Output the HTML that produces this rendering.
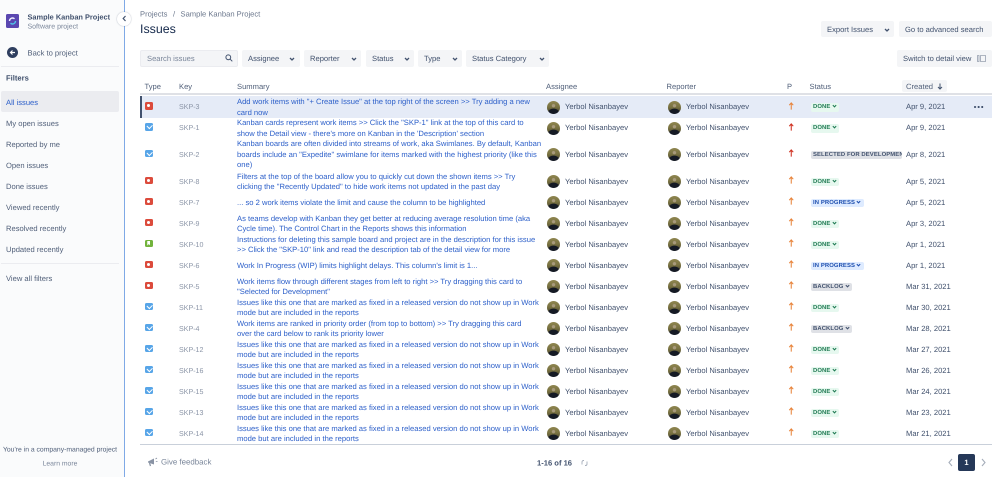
<!DOCTYPE html>
<html lang="en"><head><meta charset="utf-8"><title>Issues</title>
<style>
*{box-sizing:border-box}
html,body{margin:0;padding:0;background:#fff}
body{width:999px;height:477px;overflow:hidden;position:relative;font-family:"Liberation Sans",sans-serif;font-size:7.6px;color:#42526e;filter:blur(.25px);text-rendering:geometricPrecision}
.a{position:absolute;white-space:nowrap}
.c{line-height:12px;height:12px;transform:translateY(-5.3px)}
.btn{position:absolute;background:#f4f5f7;border-radius:2px;height:17px;line-height:18px;white-space:nowrap;color:#42526e;padding-left:6px;font-size:7.6px}
.btn svg{position:absolute;top:6.5px;width:6px;height:4px}
.side{position:absolute;left:0;top:0;width:124.5px;height:477px;background:#fafbfc;border-right:1.5px solid #7fa9e6}
.nav{position:absolute;left:6px;line-height:12px;height:12px;color:#505f79;margin-top:.7px}
.th{position:absolute;top:80.7px;line-height:12px;color:#505f79}
.r{position:absolute;left:0;width:999px;height:0}
.r>*{position:absolute}
.ty{left:145px;top:-4.5px;width:7.5px;height:7.5px;border-radius:1.5px}
.bug{background:#dc4b3c}.bug:after{content:"";position:absolute;left:2.25px;top:2.25px;width:3px;height:3px;border-radius:50%;background:#fff}
.task{background:#57a5e8}.task:after{content:"";position:absolute;left:1.8px;top:1.4px;width:4.2px;height:2.6px;border-left:1.1px solid #fff;border-bottom:1.1px solid #fff;transform:rotate(-45deg)}
.story{background:#72b33c}.story:after{content:"";position:absolute;left:2.25px;top:1.5px;width:3px;height:4.5px;background:#fff;clip-path:polygon(0 0,100% 0,100% 100%,50% 70%,0 100%)}
.k{left:179px;top:-5.5px;line-height:12px;color:#8a94a6;font-size:7.1px;white-space:nowrap}
.s{left:237px;color:#2c5fc9;line-height:10.5px;white-space:nowrap;font-size:7.62px;margin-top:1px}
.av{width:13px;height:13px;top:-6px;border-radius:50%;background:radial-gradient(circle at 50% 36%,#a89a7c 0 13%,transparent 19%),radial-gradient(ellipse 6px 5px at 50% 95%,#151a24 0 90%,transparent 100%),linear-gradient(180deg,#8f8650 0,#777040 50%,#2e2f28 100%)}
.av1{left:547px}.av2{left:668px}
.n{top:-5.5px;line-height:12px;white-space:nowrap;color:#42526e}
.n1{left:565px}.n2{left:686px}
.ar{left:788px;top:-5px;width:6.5px;height:8px}
.p{left:810.5px;top:-3.5px;height:8.5px;line-height:8.7px;border-radius:2px;font-size:5.9px;font-weight:bold;padding:0 2.5px;white-space:nowrap;letter-spacing:.1px}
.p svg{display:inline-block;width:5px;height:4px;margin-left:1.2px;vertical-align:0}
.done{background:#e6f8ef;color:#1f7a52}
.prog{background:#deebff;color:#1f50b0}
.back{background:#dfe1e6;color:#42526e}
.d{left:906px;top:-5.5px;line-height:12px;white-space:nowrap;color:#42526e}
</style></head><body>
<svg width="0" height="0" style="position:absolute"><defs>
<path id="ch" d="M1 1 L3 3 L5 1" fill="none" stroke-width="1.3"/>
<path id="up" d="M3.5 9.5 V1.5 M1 4 L3.5 1.2 L6 4" fill="none" stroke-width="1.3"/>
</defs></svg>

<div class="side">
  <div class="a" style="left:6px;top:14px;width:13px;height:13.5px;background:#5a47b0;border-radius:1.5px"></div>
  <svg class="a" style="left:8px;top:16px" width="9" height="10" viewBox="0 0 9 10"><path d="M1.5 5a3 3 0 0 1 5-2.2" stroke="#f0f0ff" stroke-width="1.4" fill="none"/><path d="M7.5 5a3 3 0 0 1-5 2.2" stroke="#4fc3e8" stroke-width="1.4" fill="none"/></svg>
  <div class="a c" style="left:27.5px;top:17px;color:#42526e;font-weight:bold;font-size:7.4px">Sample Kanban Project</div>
  <div class="a c" style="left:27.5px;top:26.5px;color:#7a869a;font-size:7px">Software project</div>
  <div class="a" style="left:7px;top:47px;width:11px;height:11px;border-radius:50%;background:#2f3f60"></div>
  <svg class="a" style="left:9px;top:49px" width="7" height="7" viewBox="0 0 7 7"><path d="M6 3.5H1.5M3.5 1.5L1.5 3.5L3.5 5.5" stroke="#fff" stroke-width="1.2" fill="none"/></svg>
  <div class="a c" style="left:27.5px;top:52.5px;color:#505f79">Back to project</div>
  <div class="a" style="left:1px;top:66px;width:118px;height:1px;background:#ebecf0"></div>
  <div class="a c" style="left:6px;top:78px;color:#42526e;font-weight:bold">Filters</div>
  <div class="a" style="left:1px;top:91px;width:118px;height:21px;background:#ebecf0;border-radius:2px"></div>
  <div class="nav" style="top:96px;color:#2c5fc9">All issues</div>
  <div class="nav" style="top:117px">My open issues</div>
  <div class="nav" style="top:138px">Reported by me</div>
  <div class="nav" style="top:159px">Open issues</div>
  <div class="nav" style="top:180px">Done issues</div>
  <div class="nav" style="top:201px">Viewed recently</div>
  <div class="nav" style="top:222px">Resolved recently</div>
  <div class="nav" style="top:243px">Updated recently</div>
  <div class="a" style="left:1px;top:263px;width:118px;height:1px;background:#ebecf0"></div>
  <div class="nav" style="top:272px">View all filters</div>
  <div class="a c" style="left:0;width:120px;text-align:center;top:450px;font-size:6.8px;color:#505f79">You're in a company-managed project</div>
  <div class="a c" style="left:0;width:120px;text-align:center;top:464px;font-size:6.8px;color:#7a869a">Learn more</div>
</div>
<div class="a" style="left:117px;top:11.5px;width:14px;height:14px;border-radius:50%;background:#fff;box-shadow:0 0 1.5px rgba(9,30,66,.35)"></div>
<svg class="a" style="left:122px;top:15px" width="5" height="7" viewBox="0 0 5 7"><path d="M3.5 1L1.2 3.5L3.5 6" stroke="#42526e" stroke-width="1.2" fill="none"/></svg>

<div class="a c" style="left:140px;top:14px;color:#6b778c">Projects</div>
<div class="a c" style="left:173px;top:14px;color:#6b778c">/</div>
<div class="a c" style="left:180.5px;top:14px;color:#6b778c">Sample Kanban Project</div>
<div class="a" style="left:140px;top:20px;line-height:18px;font-size:12.4px;color:#172b4d;font-weight:500">Issues</div>

<div class="a" style="left:140px;top:50px;width:98px;height:17px;background:#f4f5f7;border:1px solid #ebecf0;border-radius:2px;line-height:16px;padding-left:6px;color:#7a869a">Search issues</div>
<svg class="a" style="left:225px;top:54px" width="8" height="8" viewBox="0 0 8 8"><circle cx="3.3" cy="3.3" r="2.4" fill="none" stroke="#42526e" stroke-width="1"/><path d="M5.2 5.2L7.3 7.3" stroke="#42526e" stroke-width="1"/></svg>
<div class="btn" style="left:242px;top:50px;width:58px">Assignee<svg viewBox="0 0 6 4" style="left:47px" stroke="#42526e"><use href="#ch"/></svg></div>
<div class="btn" style="left:304px;top:50px;width:57px">Reporter<svg viewBox="0 0 6 4" style="left:47px" stroke="#42526e"><use href="#ch"/></svg></div>
<div class="btn" style="left:366px;top:50px;width:48px">Status<svg viewBox="0 0 6 4" style="left:38px" stroke="#42526e"><use href="#ch"/></svg></div>
<div class="btn" style="left:418px;top:50px;width:44px">Type<svg viewBox="0 0 6 4" style="left:34px" stroke="#42526e"><use href="#ch"/></svg></div>
<div class="btn" style="left:466px;top:50px;width:83px">Status Category<svg viewBox="0 0 6 4" style="left:73px" stroke="#42526e"><use href="#ch"/></svg></div>
<div class="btn" style="left:821px;top:21px;width:73px;height:16px;line-height:17px">Export Issues<svg viewBox="0 0 6 4" style="left:63px" stroke="#42526e"><use href="#ch"/></svg></div>
<div class="btn" style="left:899px;top:21px;width:93px;height:16px;line-height:17px">Go to advanced search</div>
<div class="btn" style="left:897px;top:50px;width:95px">Switch to detail view</div>
<svg class="a" style="left:977px;top:55px" width="9" height="7" viewBox="0 0 9 7"><path d="M.5.5h1.5v6H.5zM3.5.5H8.5v6H3.5z" fill="none" stroke="#97a0af" stroke-width=".8"/></svg>

<div class="th" style="left:144.5px">Type</div>
<div class="th" style="left:179px">Key</div>
<div class="th" style="left:237px">Summary</div>
<div class="th" style="left:546px">Assignee</div>
<div class="th" style="left:666.5px">Reporter</div>
<div class="th" style="left:787px">P</div>
<div class="th" style="left:809.5px">Status</div>
<div class="a" style="left:902px;top:80px;width:45px;height:12px;background:#f4f5f7;border-radius:2px"></div>
<div class="th" style="left:906px">Created</div>
<svg class="a" style="left:937px;top:83px" width="6" height="7" viewBox="0 0 6 7"><path d="M3 .5V6M1 4L3 6L5 4" fill="none" stroke="#42526e" stroke-width="1"/></svg>
<div class="a" style="left:140px;top:93px;width:852px;height:1.5px;background:#dfe1e6"></div>

<div class="a" style="left:140px;top:96px;width:852px;height:21.5px;background:#e5ebf7"></div>
<div class="a" style="left:140px;top:96px;width:1.5px;height:21.5px;background:#42526e"></div>

<div class="r" style="top:106.5px"><div class="ty bug"></div><div class="k">SKP-3</div><div class="s" style="top:-10.5px">Add work items with "+ Create Issue" at the top right of the screen &gt;&gt; Try adding a new<br>card now</div><div class="av av1"></div><div class="n n1">Yerbol Nisanbayev</div><div class="av av2"></div><div class="n n2">Yerbol Nisanbayev</div><svg class="ar" viewBox="0 0 7 10" stroke="#e8833a"><use href="#up"/></svg><div class="p done">DONE<svg viewBox="0 0 6 4" stroke="#1f7a52"><use href="#ch"/></svg></div><div class="d">Apr 9, 2021</div></div>
<div class="a" style="left:974px;top:106px;width:10px;height:2px;background:radial-gradient(circle at 1px 1px,#42526e 1px,transparent 1.1px) 0 0/3.6px 2px"></div>

<div class="r" style="top:127.5px"><div class="ty task"></div><div class="k">SKP-1</div><div class="s" style="top:-10.5px">Kanban cards represent work items &gt;&gt; Click the "SKP-1" link at the top of this card to<br>show the Detail view - there's more on Kanban in the 'Description' section</div><div class="av av1"></div><div class="n n1">Yerbol Nisanbayev</div><div class="av av2"></div><div class="n n2">Yerbol Nisanbayev</div><svg class="ar" viewBox="0 0 7 10" stroke="#cf2f1e"><use href="#up"/></svg><div class="p done">DONE<svg viewBox="0 0 6 4" stroke="#1f7a52"><use href="#ch"/></svg></div><div class="d">Apr 9, 2021</div></div>

<div class="r" style="top:154px"><div class="ty task"></div><div class="k">SKP-2</div><div class="s" style="top:-15.75px">Kanban boards are often divided into streams of work, aka Swimlanes. By default, Kanban<br>boards include an "Expedite" swimlane for items marked with the highest priority (like this<br>one)</div><div class="av av1"></div><div class="n n1">Yerbol Nisanbayev</div><div class="av av2"></div><div class="n n2">Yerbol Nisanbayev</div><svg class="ar" viewBox="0 0 7 10" stroke="#cf2f1e"><use href="#up"/></svg><div class="p back" style="width:91px;overflow:hidden">SELECTED FOR DEVELOPMENT</div><div class="d">Apr 8, 2021</div></div>

<div class="r" style="top:181px"><div class="ty bug"></div><div class="k">SKP-8</div><div class="s" style="top:-10.5px">Filters at the top of the board allow you to quickly cut down the shown items &gt;&gt; Try<br>clicking the "Recently Updated" to hide work items not updated in the past day</div><div class="av av1"></div><div class="n n1">Yerbol Nisanbayev</div><div class="av av2"></div><div class="n n2">Yerbol Nisanbayev</div><svg class="ar" viewBox="0 0 7 10" stroke="#e8833a"><use href="#up"/></svg><div class="p done">DONE<svg viewBox="0 0 6 4" stroke="#1f7a52"><use href="#ch"/></svg></div><div class="d">Apr 5, 2021</div></div>

<div class="r" style="top:202px"><div class="ty bug"></div><div class="k">SKP-7</div><div class="s" style="top:-5.25px">... so 2 work items violate the limit and cause the column to be highlighted</div><div class="av av1"></div><div class="n n1">Yerbol Nisanbayev</div><div class="av av2"></div><div class="n n2">Yerbol Nisanbayev</div><svg class="ar" viewBox="0 0 7 10" stroke="#e8833a"><use href="#up"/></svg><div class="p prog">IN PROGRESS<svg viewBox="0 0 6 4" stroke="#1f50b0"><use href="#ch"/></svg></div><div class="d">Apr 5, 2021</div></div>

<div class="r" style="top:223px"><div class="ty bug"></div><div class="k">SKP-9</div><div class="s" style="top:-10.5px">As teams develop with Kanban they get better at reducing average resolution time (aka<br>Cycle time). The Control Chart in the Reports shows this information</div><div class="av av1"></div><div class="n n1">Yerbol Nisanbayev</div><div class="av av2"></div><div class="n n2">Yerbol Nisanbayev</div><svg class="ar" viewBox="0 0 7 10" stroke="#e8833a"><use href="#up"/></svg><div class="p done">DONE<svg viewBox="0 0 6 4" stroke="#1f7a52"><use href="#ch"/></svg></div><div class="d">Apr 3, 2021</div></div>

<div class="r" style="top:244px"><div class="ty story"></div><div class="k">SKP-10</div><div class="s" style="top:-10.5px">Instructions for deleting this sample board and project are in the description for this issue<br>&gt;&gt; Click the "SKP-10" link and read the description tab of the detail view for more</div><div class="av av1"></div><div class="n n1">Yerbol Nisanbayev</div><div class="av av2"></div><div class="n n2">Yerbol Nisanbayev</div><svg class="ar" viewBox="0 0 7 10" stroke="#e8833a"><use href="#up"/></svg><div class="p done">DONE<svg viewBox="0 0 6 4" stroke="#1f7a52"><use href="#ch"/></svg></div><div class="d">Apr 1, 2021</div></div>

<div class="r" style="top:265px"><div class="ty bug"></div><div class="k">SKP-6</div><div class="s" style="top:-5.25px">Work In Progress (WIP) limits highlight delays. This column's limit is 1...</div><div class="av av1"></div><div class="n n1">Yerbol Nisanbayev</div><div class="av av2"></div><div class="n n2">Yerbol Nisanbayev</div><svg class="ar" viewBox="0 0 7 10" stroke="#e8833a"><use href="#up"/></svg><div class="p prog">IN PROGRESS<svg viewBox="0 0 6 4" stroke="#1f50b0"><use href="#ch"/></svg></div><div class="d">Apr 1, 2021</div></div>

<div class="r" style="top:286px"><div class="ty bug"></div><div class="k">SKP-5</div><div class="s" style="top:-10.5px">Work items flow through different stages from left to right &gt;&gt; Try dragging this card to<br>"Selected for Development"</div><div class="av av1"></div><div class="n n1">Yerbol Nisanbayev</div><div class="av av2"></div><div class="n n2">Yerbol Nisanbayev</div><svg class="ar" viewBox="0 0 7 10" stroke="#e8833a"><use href="#up"/></svg><div class="p back">BACKLOG<svg viewBox="0 0 6 4" stroke="#42526e"><use href="#ch"/></svg></div><div class="d">Mar 31, 2021</div></div>

<div class="r" style="top:307px"><div class="ty task"></div><div class="k">SKP-11</div><div class="s" style="top:-10.5px">Issues like this one that are marked as fixed in a released version do not show up in Work<br>mode but are included in the reports</div><div class="av av1"></div><div class="n n1">Yerbol Nisanbayev</div><div class="av av2"></div><div class="n n2">Yerbol Nisanbayev</div><svg class="ar" viewBox="0 0 7 10" stroke="#e8833a"><use href="#up"/></svg><div class="p done">DONE<svg viewBox="0 0 6 4" stroke="#1f7a52"><use href="#ch"/></svg></div><div class="d">Mar 30, 2021</div></div>

<div class="r" style="top:328px"><div class="ty task"></div><div class="k">SKP-4</div><div class="s" style="top:-10.5px">Work items are ranked in priority order (from top to bottom) &gt;&gt; Try dragging this card<br>over the card below to rank its priority lower</div><div class="av av1"></div><div class="n n1">Yerbol Nisanbayev</div><div class="av av2"></div><div class="n n2">Yerbol Nisanbayev</div><svg class="ar" viewBox="0 0 7 10" stroke="#e8833a"><use href="#up"/></svg><div class="p back">BACKLOG<svg viewBox="0 0 6 4" stroke="#42526e"><use href="#ch"/></svg></div><div class="d">Mar 28, 2021</div></div>

<div class="r" style="top:349px"><div class="ty task"></div><div class="k">SKP-12</div><div class="s" style="top:-10.5px">Issues like this one that are marked as fixed in a released version do not show up in Work<br>mode but are included in the reports</div><div class="av av1"></div><div class="n n1">Yerbol Nisanbayev</div><div class="av av2"></div><div class="n n2">Yerbol Nisanbayev</div><svg class="ar" viewBox="0 0 7 10" stroke="#e8833a"><use href="#up"/></svg><div class="p done">DONE<svg viewBox="0 0 6 4" stroke="#1f7a52"><use href="#ch"/></svg></div><div class="d">Mar 27, 2021</div></div>

<div class="r" style="top:370px"><div class="ty task"></div><div class="k">SKP-16</div><div class="s" style="top:-10.5px">Issues like this one that are marked as fixed in a released version do not show up in Work<br>mode but are included in the reports</div><div class="av av1"></div><div class="n n1">Yerbol Nisanbayev</div><div class="av av2"></div><div class="n n2">Yerbol Nisanbayev</div><svg class="ar" viewBox="0 0 7 10" stroke="#e8833a"><use href="#up"/></svg><div class="p done">DONE<svg viewBox="0 0 6 4" stroke="#1f7a52"><use href="#ch"/></svg></div><div class="d">Mar 26, 2021</div></div>

<div class="r" style="top:391px"><div class="ty task"></div><div class="k">SKP-15</div><div class="s" style="top:-10.5px">Issues like this one that are marked as fixed in a released version do not show up in Work<br>mode but are included in the reports</div><div class="av av1"></div><div class="n n1">Yerbol Nisanbayev</div><div class="av av2"></div><div class="n n2">Yerbol Nisanbayev</div><svg class="ar" viewBox="0 0 7 10" stroke="#e8833a"><use href="#up"/></svg><div class="p done">DONE<svg viewBox="0 0 6 4" stroke="#1f7a52"><use href="#ch"/></svg></div><div class="d">Mar 24, 2021</div></div>

<div class="r" style="top:412px"><div class="ty task"></div><div class="k">SKP-13</div><div class="s" style="top:-10.5px">Issues like this one that are marked as fixed in a released version do not show up in Work<br>mode but are included in the reports</div><div class="av av1"></div><div class="n n1">Yerbol Nisanbayev</div><div class="av av2"></div><div class="n n2">Yerbol Nisanbayev</div><svg class="ar" viewBox="0 0 7 10" stroke="#e8833a"><use href="#up"/></svg><div class="p done">DONE<svg viewBox="0 0 6 4" stroke="#1f7a52"><use href="#ch"/></svg></div><div class="d">Mar 23, 2021</div></div>

<div class="r" style="top:433px"><div class="ty task"></div><div class="k">SKP-14</div><div class="s" style="top:-10.5px">Issues like this one that are marked as fixed in a released version do not show up in Work<br>mode but are included in the reports</div><div class="av av1"></div><div class="n n1">Yerbol Nisanbayev</div><div class="av av2"></div><div class="n n2">Yerbol Nisanbayev</div><svg class="ar" viewBox="0 0 7 10" stroke="#e8833a"><use href="#up"/></svg><div class="p done">DONE<svg viewBox="0 0 6 4" stroke="#1f7a52"><use href="#ch"/></svg></div><div class="d">Mar 21, 2021</div></div>

<div class="a" style="left:140px;top:444px;width:852px;height:1px;background:#c9d0da"></div>

<svg class="a" style="left:147px;top:457px" width="11" height="10" viewBox="0 0 11 10"><path d="M1 4.5L7 1.5V7.5L1 5.5Z" fill="#8993a4"/><path d="M2.5 6L3.5 9" stroke="#8993a4" stroke-width="1.2"/><path d="M8.5 2L10 1M8.8 4.5H10.5" stroke="#8993a4" stroke-width=".8"/></svg>
<div class="a c" style="left:161px;top:462px;color:#7a869a;font-size:7.9px">Give feedback</div>
<div class="a c" style="left:537px;top:462.5px;color:#42526e;font-weight:bold;font-size:7.6px">1-16 of 16</div>
<svg class="a" style="left:580.5px;top:458.5px" width="7" height="8" viewBox="0 0 7 8"><path d="M1 5.5V3A1.5 1.5 0 0 1 2.5 1.5H3M6 2.5V5A1.5 1.5 0 0 1 4.5 6.5H4" fill="none" stroke="#a5adba" stroke-width=".9"/></svg>
<svg class="a" style="left:947px;top:458px" width="7" height="9" viewBox="0 0 7 9"><path d="M5 1L2 4.5L5 8" fill="none" stroke="#a5adba" stroke-width="1.1"/></svg>
<div class="a" style="left:958px;top:454px;width:17px;height:17px;background:#253858;border-radius:2px;color:#fff;text-align:center;line-height:17.5px;font-weight:bold">1</div>
<svg class="a" style="left:980px;top:458px" width="7" height="9" viewBox="0 0 7 9"><path d="M2 1L5 4.5L2 8" fill="none" stroke="#a5adba" stroke-width="1.1"/></svg>
</body></html>
